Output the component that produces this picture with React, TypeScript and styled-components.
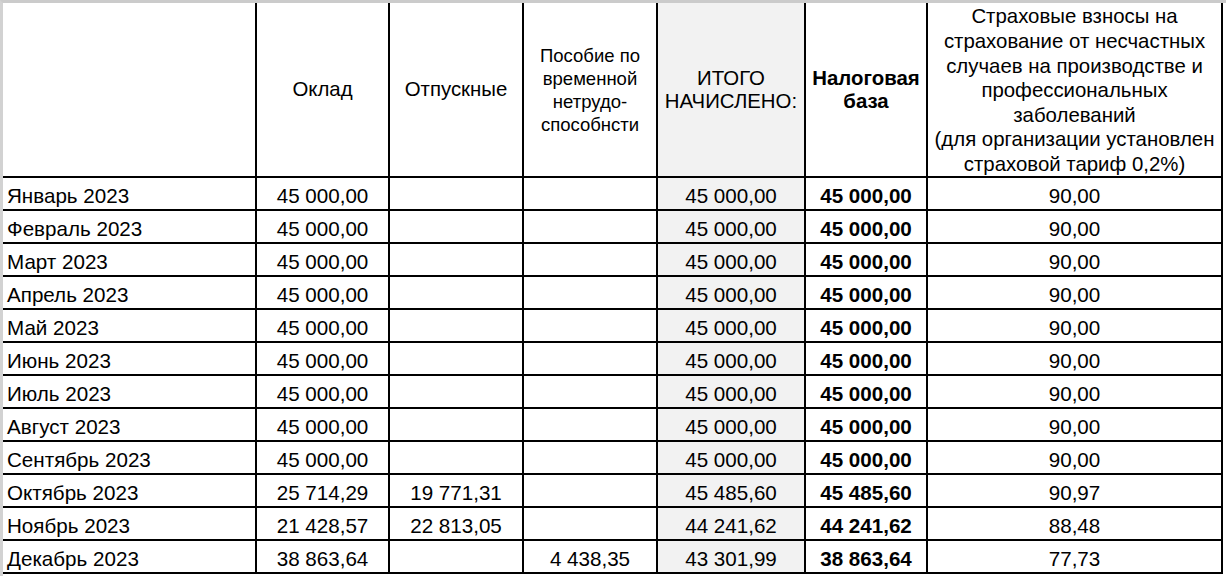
import React from "react";
import styled, { createGlobalStyle } from "styled-components";

const GlobalStyle = createGlobalStyle`
  html, body {
    margin: 0;
    padding: 0;
    background: #ffffff;
  }
  body {
    font-family: "Liberation Sans", Arial, sans-serif;
    color: #000;
  }
`;

type Row = {
  month: string;
  salary: string;
  vacation: string;
  sick: string;
  total: string;
  base: string;
  insurance: string;
};

const rows: Row[] = [
  { month: "Январь 2023", salary: "45 000,00", vacation: "", sick: "", total: "45 000,00", base: "45 000,00", insurance: "90,00" },
  { month: "Февраль 2023", salary: "45 000,00", vacation: "", sick: "", total: "45 000,00", base: "45 000,00", insurance: "90,00" },
  { month: "Март 2023", salary: "45 000,00", vacation: "", sick: "", total: "45 000,00", base: "45 000,00", insurance: "90,00" },
  { month: "Апрель 2023", salary: "45 000,00", vacation: "", sick: "", total: "45 000,00", base: "45 000,00", insurance: "90,00" },
  { month: "Май 2023", salary: "45 000,00", vacation: "", sick: "", total: "45 000,00", base: "45 000,00", insurance: "90,00" },
  { month: "Июнь 2023", salary: "45 000,00", vacation: "", sick: "", total: "45 000,00", base: "45 000,00", insurance: "90,00" },
  { month: "Июль 2023", salary: "45 000,00", vacation: "", sick: "", total: "45 000,00", base: "45 000,00", insurance: "90,00" },
  { month: "Август 2023", salary: "45 000,00", vacation: "", sick: "", total: "45 000,00", base: "45 000,00", insurance: "90,00" },
  { month: "Сентябрь 2023", salary: "45 000,00", vacation: "", sick: "", total: "45 000,00", base: "45 000,00", insurance: "90,00" },
  { month: "Октябрь 2023", salary: "25 714,29", vacation: "19 771,31", sick: "", total: "45 485,60", base: "45 485,60", insurance: "90,97" },
  { month: "Ноябрь 2023", salary: "21 428,57", vacation: "22 813,05", sick: "", total: "44 241,62", base: "44 241,62", insurance: "88,48" },
  { month: "Декабрь 2023", salary: "38 863,64", vacation: "", sick: "4 438,35", total: "43 301,99", base: "38 863,64", insurance: "77,73" },
];

function App() {
  return (
    <>
      <GlobalStyle />
      <Frame>
        <Sheet>
          <HeadCell />
          <HeadCell>Оклад</HeadCell>
          <HeadCell>Отпускные</HeadCell>
          <HeadCell $small>
            Пособие по
            <br />
            временной
            <br />
            нетрудо-
            <br />
            способнсти
          </HeadCell>
          <HeadCell $shade>
            ИТОГО
            <br />
            НАЧИСЛЕНО:
          </HeadCell>
          <HeadCell $bold>
            Налоговая
            <br />
            база
          </HeadCell>
          <HeadCell $tall>
            Страховые взносы на
            <br />
            страхование от несчастных
            <br />
            случаев на производстве и
            <br />
            профессиональных
            <br />
            заболеваний
            <br />
            (для организации установлен
            <br />
            страховой тариф 0,2%)
          </HeadCell>

          {rows.map((r) => (
            <React.Fragment key={r.month}>
              <Cell $align="left">{r.month}</Cell>
              <Cell>{r.salary}</Cell>
              <Cell>{r.vacation}</Cell>
              <Cell>{r.sick}</Cell>
              <Cell $shade>{r.total}</Cell>
              <Cell $bold>{r.base}</Cell>
              <Cell>{r.insurance}</Cell>
            </React.Fragment>
          ))}
        </Sheet>
      </Frame>
    </>
  );
}

const Frame = styled.div`
  width: 1226px;
  height: 576px;
  box-sizing: border-box;
  border-top: 3px solid #cbcbcb;
  border-left: 3px solid #d2d2d2;
  overflow: hidden;
`;

const Sheet = styled.div`
  display: grid;
  grid-template-columns: 254px 133px 134px 134px 148px 122px 295px;
  grid-template-rows: 175px repeat(12, 33px);
`;

const HeadCell = styled.div<{ $small?: boolean; $bold?: boolean; $shade?: boolean; $tall?: boolean }>`
  box-sizing: border-box;
  border-right: 2px solid #000;
  border-bottom: 2px solid #000;
  background: ${(p) => (p.$shade ? "#f2f2f2" : "#fff")};
  display: flex;
  align-items: center;
  justify-content: center;
  text-align: center;
  white-space: nowrap;
  font-size: ${(p) => (p.$small ? "18.5px" : "20.4px")};
  line-height: ${(p) => (p.$tall ? "24.6px" : "23px")};
  font-weight: ${(p) => (p.$bold ? 700 : 400)};
  padding-top: ${(p) => (p.$tall ? "2px" : "0")};
`;

const Cell = styled.div<{ $align?: "left" | "center"; $bold?: boolean; $shade?: boolean }>`
  box-sizing: border-box;
  border-right: 2px solid #000;
  border-bottom: 2px solid #000;
  background: ${(p) => (p.$shade ? "#f2f2f2" : "#fff")};
  display: flex;
  align-items: center;
  justify-content: ${(p) => (p.$align === "left" ? "flex-start" : "center")};
  padding-left: ${(p) => (p.$align === "left" ? "4px" : "0")};
  padding-top: 4px;
  font-size: 20.6px;
  font-weight: ${(p) => (p.$bold ? 700 : 400)};
  white-space: nowrap;
`;

export default App;
